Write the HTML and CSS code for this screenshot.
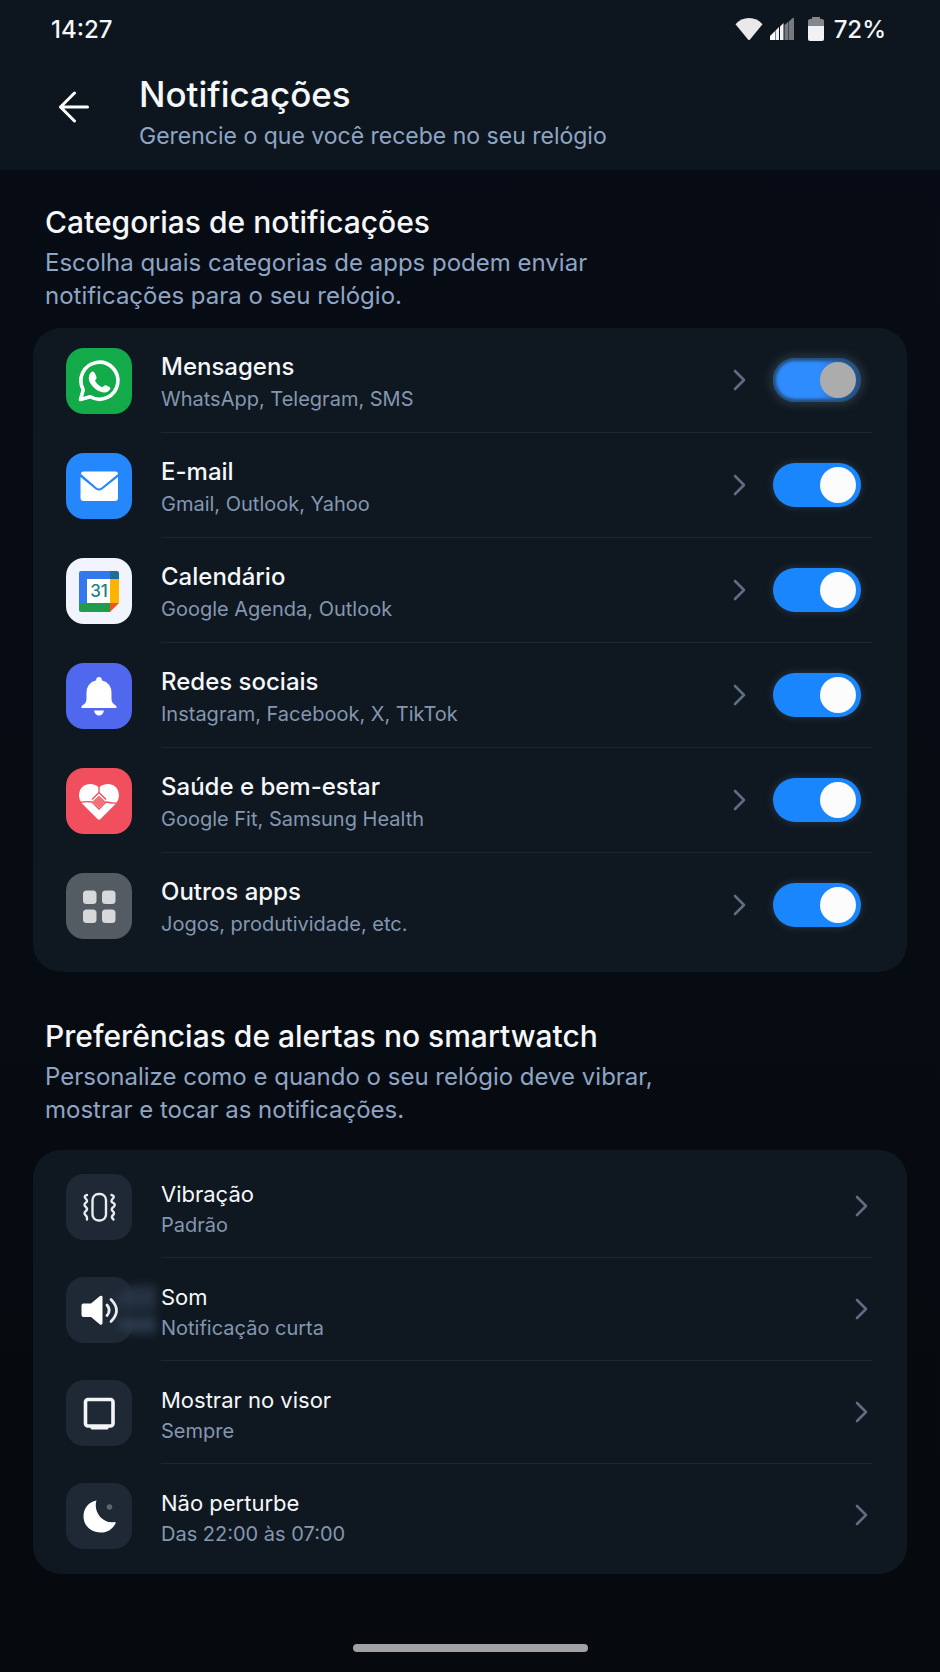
FILE: index.html
```
<!DOCTYPE html>
<html lang="pt-BR">

<head>
    <meta charset="UTF-8">
    <meta name="viewport" content="width=device-width, initial-scale=1.0">
    <title>Notificações</title>
    <link rel="stylesheet" href="styles.css">
</head>

<body>
    <!-- Shared chevron -->
    <svg class="sprite" aria-hidden="true">
        <symbol id="chevron" viewBox="0 0 14 24">
            <path d="M2 3l9 9-9 9" fill="none" stroke="currentColor" stroke-width="2.6" stroke-linecap="round" stroke-linejoin="round"/>
        </symbol>
    </svg>

    <header class="top">
        <div class="status-bar">
            <span>14:27</span>
            <div class="status-icons">
                <svg class="wifi" viewBox="0 0 28 24" width="28" height="24">
                    <path d="M.5 7.2Q6 1 14 1t13.500 6.200L15 22.500q-1 1-2 0z" fill="#e9e9ec"/>
                </svg>
                <svg class="signal" viewBox="0 0 24 24" width="24" height="24">
                    <path d="M0 23v-4l5-5v9z" fill="#fff"/>
                    <path d="M5.500 13.500l3.500-3.500V23H5.500zM10 9.500l3.500-3.500v17H10z" fill="#f2f2f4"/>
                    <path d="M14.500 8l4-3.500V23h-4zM19 4.500l3-3q2-1.500 2 .5v21h-5z" fill="#77797e"/>
                </svg>
                <svg class="battery" viewBox="0 0 16 24" width="16" height="24">
                    <path d="M4 0h8v2h2q2 0 2 2v6H0V4q0-2 2-2h2z" fill="#85878b"/>
                    <path d="M0 9h16v13q0 2-2 2H2q-2 0-2-2z" fill="#f2f2f4"/>
                </svg>
                <span>72%</span>
            </div>
        </div>
        <div class="title-bar">
            <button class="back" aria-label="Voltar">
                <svg viewBox="0 0 32 32" width="32" height="32">
                    <path d="M29.500 16H2.500M16.500 2L2.500 16l14 14" fill="none" stroke="#fff" stroke-width="3" stroke-linecap="round" stroke-linejoin="round"/>
                </svg>
            </button>
            <div class="titles">
                <h1>Notificações</h1>
                <p>Gerencie o que você recebe no seu relógio</p>
            </div>
        </div>
    </header>

    <main>
        <!-- Categories -->
        <section>
            <h2>Categorias de notificações</h2>
            <p class="intro">Escolha quais categorias de apps podem enviar notificações para o seu relógio.</p>
            <ul class="card categories">
                <li class="row">
                    <span class="icon icon-green">
                        <svg viewBox="0 0 66 66">
                            <path d="M14.500 51.500l2.800-9.700a18.500 18.500 0 1 1 7 7z" fill="none" stroke="#fff" stroke-width="3.600" stroke-linejoin="round"/>
                            <path d="M24.500 25q2.500-3 4.500.5l1.500 3.500q.5 1.500-1.500 3.500 2.500 5 7.500 6.800 2-2.500 3.500-2l3.500 1.700q1.500 1 .3 2.700-2.300 3.300-6.300 2.800-5.500-.8-10-5.200-4.300-4.600-4.800-8.800-.2-3.500 1.800-5.500z" fill="#fff"/>
                        </svg>
                    </span>
                    <div class="body">
                        <a href="#" class="link">
                            <span class="text"><strong id="c1">Mensagens</strong><small>WhatsApp, Telegram, SMS</small></span>
                            <svg class="chevron"><use href="#chevron"/></svg>
                        </a>
                        <input type="checkbox" class="toggle pressed" aria-labelledby="c1" checked>
                    </div>
                </li>
                <li class="row">
                    <span class="icon icon-blue">
                        <svg viewBox="0 0 66 66">
                            <path d="M17.500 18.500h32q2.500 0 2.500 2.500L35.500 34.500q-2.500 2-5 0L15 21q0-2.500 2.500-2.500z" fill="#fff"/>
                            <path d="M14.500 24l15 12.300q3.500 2.500 7 0L52 24v21q0 3-3 3H17.500q-3 0-3-3z" fill="#fff"/>
                        </svg>
                    </span>
                    <div class="body">
                        <a href="#" class="link">
                            <span class="text"><strong id="c2">E-mail</strong><small>Gmail, Outlook, Yahoo</small></span>
                            <svg class="chevron"><use href="#chevron"/></svg>
                        </a>
                        <input type="checkbox" class="toggle" aria-labelledby="c2" checked>
                    </div>
                </li>
                <li class="row">
                    <span class="icon icon-white">
                        <svg viewBox="0 0 66 66">
                            <path d="M15 13h29v8H21v24h-8V15q0-2 2-2z" fill="#3478ee"/>
                            <path d="M44 13h7q2 0 2 2v6h-9z" fill="#1c6f9c"/>
                            <path d="M44 21h9v24h-9z" fill="#fdb400"/>
                            <path d="M13 45h31v9H15q-2 0-2-2z" fill="#1f9d4b"/>
                            <path d="M44 45h9l-9 9z" fill="#f4511e"/>
                            <path d="M21 21h23v24H21z" fill="#fff"/>
                            <text x="33" y="39" text-anchor="middle" class="day">31</text>
                        </svg>
                    </span>
                    <div class="body">
                        <a href="#" class="link">
                            <span class="text"><strong id="c3">Calendário</strong><small>Google Agenda, Outlook</small></span>
                            <svg class="chevron"><use href="#chevron"/></svg>
                        </a>
                        <input type="checkbox" class="toggle" aria-labelledby="c3" checked>
                    </div>
                </li>
                <li class="row">
                    <span class="icon icon-indigo">
                        <svg viewBox="0 0 66 66">
                            <path d="M33 14q2.800 0 2.800 3.200 9.700 2.800 9.700 12.800v6q0 4 4.300 6.500.8.700.8 2.500h-35.200q0-1.800.8-2.500 4.300-2.500 4.300-6.500v-6q0-10 9.700-12.800 0-3.200 2.800-3.200zM28 47.500h10q-1.200 5-5 5t-5-5z" fill="#fff"/>
                        </svg>
                    </span>
                    <div class="body">
                        <a href="#" class="link">
                            <span class="text"><strong id="c4">Redes sociais</strong><small>Instagram, Facebook, X, TikTok</small></span>
                            <svg class="chevron"><use href="#chevron"/></svg>
                        </a>
                        <input type="checkbox" class="toggle" aria-labelledby="c4" checked>
                    </div>
                </li>
                <li class="row">
                    <span class="icon icon-red">
                        <svg viewBox="0 0 66 66">
                            <path d="M33 19.500C27 13.500 13.500 14.500 13 27.500q0 4 2.500 7.500L31.500 51q1.500 1.500 3 0l16-16q2.500-3.500 2.500-7.500C52.500 14.500 39 13.500 33 19.500z" fill="#fff"/>
                            <path d="M33 27.500l6.500 6-6.500 6.500-6.500-6.500z" fill="#f2707a"/>
                            <path d="M14.500 34.500q5.500-1.500 11.500-.5l7 7 7-7q6 1.500 12 1M33 19v5.500l-7 7M33 24.500l7 7" fill="none" stroke="#f24b5b" stroke-width="1.300"/>
                        </svg>
                    </span>
                    <div class="body">
                        <a href="#" class="link">
                            <span class="text"><strong id="c5">Saúde e bem-estar</strong><small>Google Fit, Samsung Health</small></span>
                            <svg class="chevron"><use href="#chevron"/></svg>
                        </a>
                        <input type="checkbox" class="toggle" aria-labelledby="c5" checked>
                    </div>
                </li>
                <li class="row">
                    <span class="icon icon-gray">
                        <svg viewBox="0 0 66 66" fill="#d6d8da">
                            <rect x="17" y="17.500" width="13.500" height="13.500" rx="3.500"/>
                            <rect x="36" y="17.500" width="13.500" height="13.500" rx="3.500"/>
                            <rect x="17" y="36.500" width="13.500" height="13.500" rx="3.500"/>
                            <rect x="36" y="36.500" width="13.500" height="13.500" rx="3.500"/>
                        </svg>
                    </span>
                    <div class="body">
                        <a href="#" class="link">
                            <span class="text"><strong id="c6">Outros apps</strong><small>Jogos, produtividade, etc.</small></span>
                            <svg class="chevron"><use href="#chevron"/></svg>
                        </a>
                        <input type="checkbox" class="toggle" aria-labelledby="c6" checked>
                    </div>
                </li>
            </ul>
        </section>

        <!-- Watch alerts -->
        <section>
            <h2>Preferências de alertas no smartwatch</h2>
            <p class="intro">Personalize como e quando o seu relógio deve vibrar, mostrar e tocar as notificações.</p>
            <ul class="card preferences">
                <li>
                    <a href="#" class="row">
                        <span class="icon">
                            <svg viewBox="0 0 66 66" fill="none" stroke="#e8ebef" stroke-width="2.400" stroke-linecap="round" stroke-linejoin="round">
                                <rect x="26.500" y="20" width="13.500" height="26.500" rx="6"/>
                                <path d="M21 21q-4 1-1 4 2 2 0 3.500-3 2 0 4.500 2 2 0 4-3 2 0 4.500 1.500 2 1 4M45.500 21q4 1 1 4-2 2 0 3.500 4 2 1 4.500-3 2-1 4 3 2 0 4.500-1.500 2 1 4"/>
                            </svg>
                        </span>
                        <span class="body">
                            <span class="text"><strong>Vibração</strong><small>Padrão</small></span>
                            <svg class="chevron"><use href="#chevron"/></svg>
                        </span>
                    </a>
                </li>
                <li>
                    <a href="#" class="row">
                        <span class="icon glow">
                            <svg viewBox="0 0 66 66">
                                <path d="M17.500 26.500H25l9-7.500q2.500-1 2.500 1v26q0 2.500-2.500 1.500l-9-7.500h-7.500q-2 0-2-2v-9.500q0-2 2-2z" fill="#fff"/>
                                <path d="M41 28q4.500 5.500 0 10.500M45 22.500q11 11 0 22" fill="none" stroke="#e8ebef" stroke-width="2.800" stroke-linecap="round"/>
                            </svg>
                        </span>
                        <span class="body">
                            <span class="text"><strong>Som</strong><small>Notificação curta</small></span>
                            <svg class="chevron"><use href="#chevron"/></svg>
                        </span>
                    </a>
                </li>
                <li>
                    <a href="#" class="row">
                        <span class="icon">
                            <svg viewBox="0 0 66 66">
                                <rect x="19.500" y="19.500" width="27.500" height="26.500" rx="2.500" fill="none" stroke="#f4f5f7" stroke-width="3.600"/>
                                <path d="M24.500 46h18v2q0 1.500-1.500 1.500H26q-1.500 0-1.500-1.500z" fill="#f4f5f7"/>
                            </svg>
                        </span>
                        <span class="body">
                            <span class="text"><strong>Mostrar no visor</strong><small>Sempre</small></span>
                            <svg class="chevron"><use href="#chevron"/></svg>
                        </span>
                    </a>
                </li>
                <li>
                    <a href="#" class="row">
                        <span class="icon">
                            <svg viewBox="0 0 66 66">
                                <path d="M30.500 17.500C27 28 36 41.500 49 39c.8 0 .8.800.5 1.500C46 47 40 50 34.500 49.500 24 49 17.500 42 17.500 33.500 17.500 25.500 22.500 19 30.500 17.500z" fill="#fff"/>
                                <circle cx="43.500" cy="24" r="2.800" fill="#5b6570"/>
                            </svg>
                        </span>
                        <span class="body">
                            <span class="text"><strong>Não perturbe</strong><small>Das 22:00 às 07:00</small></span>
                            <svg class="chevron"><use href="#chevron"/></svg>
                        </span>
                    </a>
                </li>
            </ul>
        </section>
    </main>

    <footer>
        <div class="home-bar"></div>
    </footer>
</body>

</html>
```
FILE: styles.css
```
/* General Styles */
:root {
    --header-color: #0d161f;
    --card-color: #0f1820;
    --line-color: #1d2731;
    --text-color: #f6f7f9;
    --intro-color: #8fa5c4;
    --muted-color: #8496b0;
    --chevron-color: #5f6c84;
    --accent-color: #1a86fd;
}

* {
    box-sizing: border-box;
}

body {
    display: flex;
    flex-direction: column;
    min-height: 100vh;
    margin: 0;
    background: linear-gradient(#060b15, #070c13 50%, #06090d);
    font-family: Inter, 'Open Sans', sans-serif;
    color: var(--text-color);
}

h1,
h2,
p,
ul {
    margin: 0;
    padding: 0;
}

ul {
    list-style: none;
}

a {
    color: inherit;
    text-decoration: none;
}

.sprite {
    display: none;
}

/* Header */
.top {
    padding-bottom: 14px;
    background-color: var(--header-color);
}

.status-bar {
    display: flex;
    justify-content: space-between;
    align-items: center;
    height: 58px;
    padding: 0 54px 0 51px;
    font-size: 24px;
    font-weight: 500;
}

.status-icons {
    display: flex;
    align-items: center;
}

.signal {
    margin: 0 14px 0 7px;
}

.battery {
    margin-right: 10px;
}

.title-bar {
    display: flex;
    align-items: center;
    padding: 0 58px;
}

.back {
    display: flex;
    margin-right: 49px;
    padding: 0;
    border: none;
    background: none;
    cursor: pointer;
}

.titles {
    padding-top: 14px;
}

h1 {
    font-size: 35px;
    font-weight: 500;
    line-height: 44px;
}

.title-bar p {
    font-size: 23px;
    line-height: 40px;
    color: var(--intro-color);
}

/* Sections */
main {
    flex: 1;
    padding: 34px 33px 0;
}

section + section {
    margin-top: 46px;
}

h2 {
    padding: 0 12px;
    font-size: 30px;
    font-weight: 500;
    line-height: 36px;
}

.intro {
    max-width: 640px;
    margin-top: 6px;
    padding: 0 12px;
    font-size: 24px;
    line-height: 33px;
    color: var(--intro-color);
}

.card {
    margin-top: 16px;
    padding: 0 35px 14px 33px;
    border-radius: 28px;
    background-color: var(--card-color);
}

.preferences {
    margin-top: 24px;
    padding-top: 5px;
    padding-bottom: 7px;
}

/* Rows */
.row {
    display: flex;
    align-items: center;
    gap: 29px;
    height: 105px;
}

.preferences .row {
    height: 103px;
}

.body {
    display: flex;
    flex: 1;
    align-items: center;
    height: 100%;
    border-bottom: 1px solid var(--line-color);
}

.categories .body {
    padding-right: 11px;
}

li:last-child .body {
    border-bottom-color: transparent;
}

.link {
    display: flex;
    flex: 1;
    align-items: center;
    margin-right: 26px;
}

.text {
    flex: 1;
    padding-top: 5px;
}

.text strong,
.text small {
    display: block;
    line-height: 32px;
}

.text strong {
    font-size: 24px;
    font-weight: 500;
}

.text small {
    font-size: 20px;
    color: var(--muted-color);
}

.preferences .text strong {
    font-size: 22px;
    font-weight: 400;
}

.preferences .text small {
    line-height: 30px;
}

.chevron {
    width: 14px;
    height: 24px;
    color: var(--chevron-color);
}

.preferences .chevron {
    margin-right: 3px;
}

/* Icons */
.icon {
    position: relative;
    width: 66px;
    height: 66px;
    border-radius: 18px;
    background-color: #1e2935;
}

.icon svg {
    position: relative;
    z-index: 1;
    display: block;
    width: 66px;
    height: 66px;
}

.icon-green {
    background-color: #13ab4a;
}

.icon-blue {
    background-color: #2487fb;
}

.icon-white {
    background-color: #f1f4fc;
}

.icon-indigo {
    background-color: #5068ee;
}

.icon-red {
    background-color: #f24f5e;
}

.icon-gray {
    background-color: #555b63;
}

.day {
    font-size: 17px;
    font-weight: 500;
    fill: #22807f;
}

/* Light coming out of the speaker */
.glow::after {
    content: '';
    position: absolute;
    top: 8px;
    left: 52px;
    width: 38px;
    height: 50px;
    border-radius: 16px 0 0 16px;
    background: linear-gradient(#24303f, #2a384a 30%, #18222e 60%, #34445a 78%, #1c2836);
    filter: blur(4px);
    opacity: 0.9;
}

/* Toggle */
.toggle {
    width: 88px;
    height: 44px;
    margin: 0;
    padding: 4px 5px;
    appearance: none;
    border-radius: 22px;
    background-color: #26323e;
    box-shadow: 0 0 8px rgba(120, 150, 190, 0.25);
    cursor: pointer;
}

.toggle::before {
    content: '';
    display: block;
    width: 36px;
    height: 36px;
    border-radius: 50%;
    background-color: #fcfcfd;
}

.toggle:checked {
    background-color: var(--accent-color);
}

.toggle:checked::before {
    margin-left: auto;
}

.toggle.pressed {
    background: radial-gradient(circle at 28px 50%, #2f8cff 24px, transparent 60px), #24507f;
    box-shadow: inset 0 0 3px 3px #24507f, 0 0 10px 3px rgba(120, 140, 165, 0.25);
}

.toggle.pressed::before {
    background-color: #acacac;
}

/* Home indicator */
footer {
    display: flex;
    justify-content: center;
    padding: 0 0 20px;
}

.home-bar {
    width: 25%;
    height: 8px;
    border-radius: 4px;
    background-color: #a2a2a5;
}
```
